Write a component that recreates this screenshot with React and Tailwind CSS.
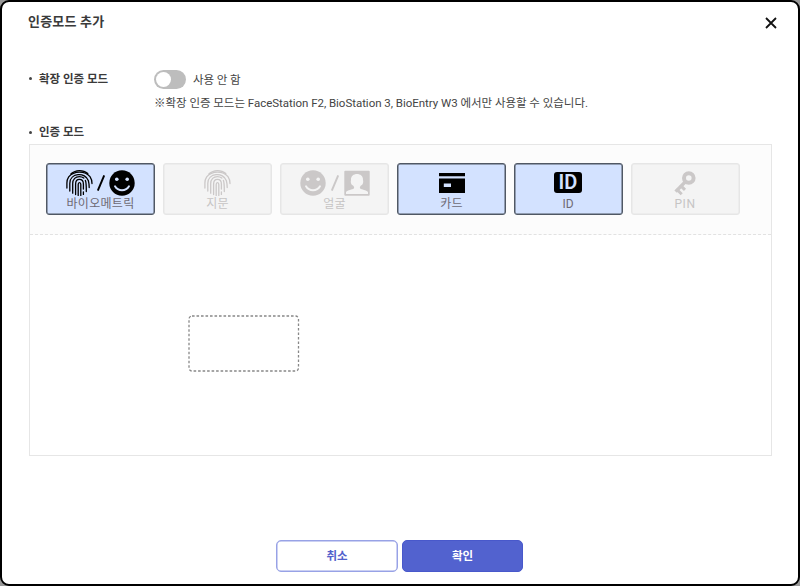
import React from "react";

function Fingerprint() {
  return (
    <svg width="27" height="28" viewBox="0 0 27 28" fill="none" stroke="currentColor" strokeWidth="1.3" strokeLinecap="round" className="shrink-0">
      <path d="M5 4.8C9.6 0.5 17.2 0.5 21.8 4.6" />
      <path d="M0.9 19V14C0.9 11.6 1.6 9.4 2.7 7.8C8 1.6 19 1.6 24 7.6C25.4 9.6 26 11.4 26 14.6" />
      <path d="M3.8 22V14.4C3.8 3.6 19.6 2.8 22.4 11.8C23.1 14.4 23.2 16 23.2 18.5" />
      <path d="M6.7 24.2V14.8C6.7 10 9.6 7.6 13.4 7.6C15.2 7.6 16.6 8.1 17.8 9.1M19.4 11.4C20.4 13.8 20.3 17 20.3 22.6" />
      <path d="M9.6 25.6V15.2C9.6 12 11.2 10.4 13.4 10.4C16 10.4 17.4 12.4 17.4 15.2V20M17.4 22.8V25.4" />
      <path d="M12.2 26.4V15.6C12.2 13 14.8 13 14.8 15.6V26.4" />
    </svg>
  );
}

function Smiley() {
  return (
    <svg width="26" height="26" viewBox="0 0 26 26" className="shrink-0">
      <circle cx="13" cy="13" r="12.7" fill="currentColor" />
      <circle cx="7.8" cy="9.2" r="1.8" className="fill-[var(--face)]" />
      <circle cx="18.2" cy="9.2" r="1.8" className="fill-[var(--face)]" />
      <path d="M6 16.3C9 21.6 17 21.6 20 16.3" fill="none" className="stroke-[var(--face)]" strokeWidth="1.9" strokeLinecap="round" />
    </svg>
  );
}

function Slash() {
  return (
    <svg width="8" height="18" viewBox="0 0 8 18" className="shrink-0">
      <path d="M0.8 16.6L7.2 1.4" stroke="currentColor" strokeWidth="1.9" />
    </svg>
  );
}

function Portrait() {
  return (
    <svg width="26" height="26" viewBox="0 0 26 26" className="shrink-0">
      <rect x="0.3" y="0.8" width="25.4" height="25" rx="1" fill="currentColor" />
      <path d="M2 24V22C4 19.8 8 20 9.8 18.6C10.5 17.8 10 16.6 9.3 15.7C6.8 14.8 6.4 12 7 10C6.4 2 19.6 2 19 10C19.6 12 19.2 14.8 16.7 15.7C16 16.6 15.5 17.8 16.2 18.6C18 20 22 19.8 24 22V24Z" className="fill-[var(--face)]" />
    </svg>
  );
}

function CardIcon() {
  return (
    <svg width="26" height="20" viewBox="0 0 26 20" className="shrink-0">
      <path d="M0 0H26V3.2H0ZM0 5.6H26V20H0ZM4.8 10.5V14H12V10.5Z" fill="currentColor" fillRule="evenodd" />
    </svg>
  );
}

function KeyIcon() {
  return (
    <svg width="22" height="26" viewBox="0 0 22 26" fill="none" stroke="currentColor" className="mr-px shrink-0">
      <circle cx="14.8" cy="8" r="4.8" strokeWidth="4" />
      <path d="M11.4 11.8L1.6 21.6" strokeWidth="3.4" />
      <path d="M2.4 19L7.7 24.2M6.4 15.4L11 19.9" strokeWidth="3" />
    </svg>
  );
}

function Tile({ active, label, children, labelClass = "tracking-[0.3px]" }) {
  const look = active
    ? "border-[#505864] bg-[#d3e2ff] text-black shadow-[inset_0_0_0_0.5px_#505864] [--face:#d3e2ff]"
    : "border-[#e6e6e6] bg-[#f4f4f4] text-[#cbc8c8] shadow-[inset_0_0_0_0.5px_#e6e6e6] [--face:#f4f4f4]";
  return (
    <button className={`flex h-[52px] w-[109px] shrink-0 flex-col items-center rounded-[3px] border pt-[5px] ${look}`}>
      <span className="flex h-[28px] shrink-0 items-center justify-center">{children}</span>
      <span className={`h-[14px] text-[12px] leading-[14px] whitespace-nowrap ${labelClass} ${active ? "text-[#6e6a74]" : "text-[#c6c4c4]"}`}>{label}</span>
    </button>
  );
}

function Label({ children }) {
  return (
    <div className="flex items-center text-[11.5px] leading-[16px] font-bold text-[#3a3a3a]">
      <span className="mr-[7px] ml-px size-[3px] rounded-full bg-[#444]" />
      {children}
    </div>
  );
}

export default function App() {
  return (
    <div className="h-[586px] w-[800px] overflow-hidden bg-[#999] font-[Roboto,'Noto_Sans_CJK_KR',sans-serif]">
      <div className="flex h-full flex-col rounded-[9px] border-2 border-black bg-white">
        <header className="flex h-[38px] shrink-0 items-center justify-between pr-[21px] pl-[26px]">
          <h1 className="mt-[2px] text-[13px] leading-[18px] font-bold tracking-[0.2px] text-[#3a3a3a]">인증모드 추가</h1>
          <button className="mt-[3px]" aria-label="close">
            <svg width="12" height="12" viewBox="0 0 12 12" stroke="#111" strokeWidth="1.8">
              <path d="M1 1L11 11M11 1L1 11" />
            </svg>
          </button>
        </header>

        <div className="mt-[30px] ml-[26px] flex h-[19px] shrink-0 items-center">
          <div className="mb-[2px] w-[126px]"><Label>확장 인증 모드</Label></div>
          <span className="flex h-[19px] w-[32px] items-center rounded-full bg-[#bdbdbd] px-[1.5px]">
            <span className="size-[15.5px] rounded-full bg-white" />
          </span>
          <span className="ml-[7px] text-[11.5px] leading-[16px] tracking-[-0.1px] text-[#444]">사용 안 함</span>
        </div>
        <p className="mt-[5px] ml-[152px] h-[18px] shrink-0 text-[11.5px] leading-[18px] tracking-[-0.03px] whitespace-nowrap text-[#444]">
          ※확장 인증 모드는 FaceStation F2, BioStation 3, BioEntry W3 에서만 사용할 수 있습니다.
        </p>
        <div className="mt-[11px] ml-[26px] h-[21px] shrink-0 pt-px"><Label>인증 모드</Label></div>

        <section className="ml-[27px] flex h-[312px] w-[743px] shrink-0 flex-col border border-[#e6e6e6]">
          <div className="flex h-[90px] shrink-0 gap-[8px] border-b border-dashed border-[#e2e2e2] bg-[#fcfcfc] pt-[18px] pl-[16px]">
            <Tile active label="바이오메트릭">
              <span className="flex items-center gap-[4px]"><Fingerprint /><Slash /><Smiley /></span>
            </Tile>
            <Tile label="지문"><Fingerprint /></Tile>
            <Tile label="얼굴">
              <span className="flex items-center gap-[5px]"><Smiley /><Slash /><Portrait /></span>
            </Tile>
            <Tile active label="카드"><CardIcon /></Tile>
            <Tile active label="ID" labelClass="pr-px">
              <span className="mr-[1px] mb-[2px] flex h-[21px] w-[28px] items-center justify-center rounded-[3px] bg-black text-[20px] leading-[21px] font-semibold text-[#d3e2ff]">ID</span>
            </Tile>
            <Tile label="PIN" labelClass="pr-px tracking-[0.5px]"><KeyIcon /></Tile>
          </div>
          <div className="pt-[80px] pl-[158px]">
            <svg width="112" height="57" viewBox="0 0 112 57" fill="none">
              <rect x="1" y="1" width="109.5" height="55" rx="3" stroke="#888" strokeWidth="1.3" strokeDasharray="2.6 1.9" />
            </svg>
          </div>
        </section>

        <footer className="mt-[84px] ml-[274px] flex h-[32px] shrink-0 gap-[4px] text-[11.5px] font-bold">
          <button className="w-[122px] rounded-[5px] border border-[#98a2e6] bg-white pt-px text-[#5261cc] shadow-[inset_0_0_0_0.5px_#98a2e6]">취소</button>
          <button className="w-[121px] rounded-[5px] border border-[#4858cb] bg-[#5262cf] pt-px text-white">확인</button>
        </footer>
      </div>
    </div>
  );
}
